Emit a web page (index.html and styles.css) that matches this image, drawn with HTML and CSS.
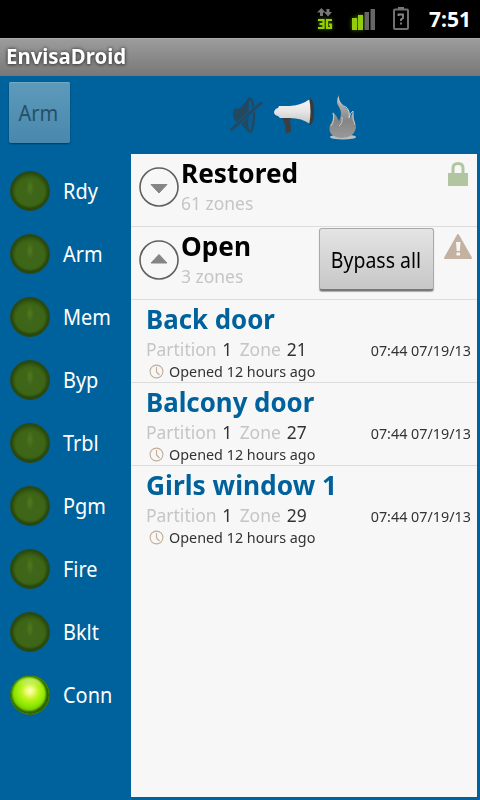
FILE: index.html
```html
<!DOCTYPE html>
<html lang="en">
<head>
<meta charset="utf-8">
<title>EnvisaDroid</title>
<link rel="stylesheet" href="styles.css">
</head>
<body>
<svg width="0" height="0" class="defs" aria-hidden="true">
  <defs>
    <linearGradient id="horn" x1="0" y1="0" x2="0" y2="1"><stop offset="0" stop-color="#f4f4f4"/><stop offset=".5" stop-color="#e6e6e6"/><stop offset="1" stop-color="#c4c4c4"/></linearGradient>
    <linearGradient id="flame" x1="0" y1="0" x2="0" y2="1"><stop offset="0" stop-color="#c4c4c4"/><stop offset=".6" stop-color="#858585"/><stop offset="1" stop-color="#999"/></linearGradient>
    <symbol id="clock" viewBox="0 0 15 15"><circle cx="7.5" cy="7.5" r="6.4" fill="none" stroke="#c3ad98" stroke-width="1.1"/><path d="M7.5 3v5l3 3" fill="none" stroke="#c3ad98" stroke-width="1.1"/></symbol>
  </defs>
</svg>
<header class="status">
  <svg class="net" width="16" height="24" viewBox="0 0 16 24">
    <path d="M4.500 0L0 4.500H3V8H6V4.500H8.500ZM9.500 1V4H7L11 8.500L15 4H12.500V1Z" fill="#777"/>
    <path class="glow" d="M1 12H6.500V20H1M2.500 16H6.500M15 12H10V20H14V16.500H12" fill="none" stroke="#99d000" stroke-width="2.200"/>
  </svg>
  <svg class="signal" width="24" height="22" viewBox="0 0 24 22">
    <path class="glow" d="M0 9H5V21H0ZM6 6H11V21H6Z" fill="#94cd0b"/>
    <path d="M12.500 3H17V21H12.500ZM18.500 0H23V21H18.500Z" fill="#666"/>
  </svg>
  <svg class="battery" width="16" height="23" viewBox="0 0 16 23">
    <path d="M5 0H11V2H5Z" fill="#777"/><rect x="1" y="2.500" width="14" height="19.500" rx="1" fill="none" stroke="#707070" stroke-width="2"/>
    <path d="M5.500 9V7.500H10V11L8 12.500V14M8 15.500V17.500" fill="none" stroke="#888" stroke-width="1.800"/>
  </svg>
  <span class="time">7:51</span>
</header>
<div class="titlebar"><span>EnvisaDroid</span></div>
<main>
  <div class="toolbar">
    <button class="arm"><span>Arm</span></button>
    <div class="tools">
      <svg width="34" height="38" viewBox="0 0 34 38"><ellipse cx="20" cy="18" rx="4" ry="16.500" fill="#075e93" stroke="#24485f" stroke-width="2.400"/><path d="M4 12L10 11L18 2Q20 17 17 34L11 27L6 25Q1 18 4 12Z" fill="#24485f"/><path d="M0 34L31 6" stroke="#075e93" stroke-width="4.500"/><path d="M1 33L32 5" stroke="#24485f" stroke-width="2.600"/></svg>
      <svg width="42" height="37" viewBox="0 0 42 37"><path d="M8 19L17 20Q15 25 17 28L17 34L12 35L11 27Z" fill="#3c3e40"/><path d="M0 14Q1 10.500 4 10L5 8H16Q28 7 36 1Q39 13 36 26Q28 20 16 20H6L4 18Q0 17 0 14Z" fill="url(#horn)"/><path d="M35 0Q40 0 40 13Q40 27 35 27Q38 14 35 0Z" fill="#383a3c"/></svg>
      <svg width="30" height="45" viewBox="0 0 30 45"><ellipse cx="15" cy="42" rx="13" ry="2.500" fill="#b8c0c5"/><path d="M11 0Q7 7 11 12Q15 18 11 26Q9 21 5 17Q6 25 2 30Q-1 42 14 43Q27 42 28 32Q26 26 25 18Q23 20 22 24Q23 16 18 13Q10 8 11 0Z" fill="url(#flame)"/><path d="M10 3Q12 10 18 12Q22 15 21 23Q22 18 25 16Q24 24 27 30M5 18Q7 26 3 31M14 22Q15 28 11 31" fill="none" stroke="#ccc" stroke-width="1"/></svg>
    </div>
  </div>
  <div class="content">
    <ul class="leds">
      <li><i></i><span>Rdy</span></li>
      <li><i></i><span>Arm</span></li>
      <li><i></i><span>Mem</span></li>
      <li><i></i><span>Byp</span></li>
      <li><i></i><span>Trbl</span></li>
      <li><i></i><span>Pgm</span></li>
      <li><i></i><span>Fire</span></li>
      <li><i></i><span>Bklt</span></li>
      <li><i class="on"></i><span>Conn</span></li>
    </ul>
    <section class="list">
      <div class="group">
        <svg class="toggle" width="40" height="40" viewBox="0 0 40 40"><circle cx="20" cy="20" r="19" fill="none" stroke="#606060" stroke-width="1.600"/><path d="M12 17.500H28L20 26Z" fill="#858585" stroke="#858585" stroke-linejoin="round"/></svg>
        <div class="label"><h2><span>Restored</span></h2><p><span>61 zones</span></p></div>
        <svg class="lock" width="20" height="24" viewBox="0 0 20 24"><path d="M5 12V6Q5 1.500 10 1.500T15 6V12" fill="none" stroke="#b2c5a1" stroke-width="3"/><path d="M0 11H20V24H0Z" fill="#b2c5a1"/></svg>
      </div>
      <div class="group">
        <svg class="toggle" width="40" height="40" viewBox="0 0 40 40"><circle cx="20" cy="20" r="19" fill="none" stroke="#606060" stroke-width="1.600"/><path d="M12 23H28L20 14.500Z" fill="#858585" stroke="#858585" stroke-linejoin="round"/></svg>
        <div class="label"><h2><span>Open</span></h2><p><span>3 zones</span></p></div>
        <button class="bypass"><span>Bypass all</span></button>
        <svg class="warn" width="28" height="25" viewBox="0 0 28 25"><path d="M14 1L27 24H1Z" fill="#c3b1a1" stroke="#c3b1a1" stroke-width="2" stroke-linejoin="round"/><path d="M12 8H16.500L15.800 17H12.700ZM12.500 18.500H16V21.500H12.500Z" fill="#f7f7f7"/></svg>
      </div>
      <article>
        <h3><span>Back door</span></h3>
        <div class="where"><div class="ids"><span class="key">Partition</span><b>1</b><span class="key">Zone</span><b>21</b></div><time>07:44 07/19/13</time></div>
        <div class="ago"><svg width="15" height="15"><use href="#clock"/></svg><span>Opened 12 hours ago</span></div>
      </article>
      <article>
        <h3><span>Balcony door</span></h3>
        <div class="where"><div class="ids"><span class="key">Partition</span><b>1</b><span class="key">Zone</span><b>27</b></div><time>07:44 07/19/13</time></div>
        <div class="ago"><svg width="15" height="15"><use href="#clock"/></svg><span>Opened 12 hours ago</span></div>
      </article>
      <article>
        <h3 class="wide"><span>Girls window 1</span></h3>
        <div class="where"><div class="ids"><span class="key">Partition</span><b>1</b><span class="key">Zone</span><b>29</b></div><time>07:44 07/19/13</time></div>
        <div class="ago"><svg width="15" height="15"><use href="#clock"/></svg><span>Opened 12 hours ago</span></div>
      </article>
    </section>
  </div>
</main>
</body>
</html>
```
FILE: styles.css
```css
* { box-sizing: border-box; margin: 0; padding: 0; }
body { width: 480px; height: 800px; overflow: hidden; background: #00629c; font-family: "Noto Sans", "Open Sans", sans-serif; display: flex; flex-direction: column; }
.defs { position: absolute; }
svg { display: block; flex: none; }
span, b, time { white-space: nowrap; display: inline-block; transform-origin: 0 50%; }
.status { height: 38px; background: #000; display: flex; align-items: flex-start; flex: none; }
.net { margin: 8px 0 0 317px; overflow: visible; }
.signal { margin: 9px 0 0 19px; overflow: visible; }
.battery { margin: 7px 0 0 17px; }
.glow { filter: drop-shadow(0 0 2px #4c7600); }
.time { color: #fff; font-size: 21px; font-weight: 700; line-height: 38px; margin-left: 20px; }
.titlebar { height: 38px; flex: none; background: linear-gradient(#9c9c9c, #777); border-top: 1px solid #aaa; padding-left: 6px; line-height: 35px; color: #fff; font-size: 21px; font-weight: 700; text-shadow: 0 0 4px #333, 0 1px 3px #555; }
.titlebar span { transform: scaleX(.97); }
main { flex: 1; display: flex; flex-direction: column; }
.toolbar { height: 78px; display: flex; }
button { border: 0; font-family: inherit; font-size: 22px; display: flex; align-items: center; justify-content: center; }
button span { transform: scaleX(.885); transform-origin: 50% 50%; margin-left: -1px; }
.arm { width: 61px; height: 61px; margin: 6px 0 0 9px; border-radius: 2px; background: linear-gradient(#5d9aba, #4988ad); color: #245067; box-shadow: 0 1px 2px #003b60, inset 0 1px #72a9c4; }
.arm span { transform: translate(-.5px, -1px) scaleX(.91); }
.tools { display: flex; gap: 11px; margin: 18px 0 0 160px; align-items: flex-start; }
.tools svg:first-child { margin-top: 3px; }
.tools svg:nth-child(2) { margin-top: 4px; margin-left: -1px; }
.tools svg:nth-child(3) { margin-top: 1px; margin-left: 1px; }
.content { flex: 1; display: flex; }
.leds { list-style: none; width: 131px; padding: 5px 0 0 10px; }
.leds li { height: 63px; display: flex; align-items: center; color: #fff; font-size: 22px; gap: 13px; }
.leds span { transform: translateY(-1.500px) scaleX(.905); }
.leds i { width: 40px; height: 40px; flex: none; border-radius: 50%; background: radial-gradient(ellipse 4px 9px at 50% 41%, rgba(83,132,32,.7), transparent), radial-gradient(circle at 50% 55%, #40651a 0, #3d6616 50%, #33510f 72%); border: 1px solid #28471e; box-shadow: inset 0 0 2px 2px #294b10, inset 0 -2px 2px #1d3b0c; }
.leds i.on { background: radial-gradient(ellipse 20px 6px at 50% 13%, rgba(196,235,134,.65), transparent), radial-gradient(circle at 50% 39%, #fcffc0 0, #eefb7c 12%, #c1f321 28%, #8de900 50%, #70be00 73%); border-color: #32730b; box-shadow: inset -1px -1px 2px 2px #2d6000; }
.list { width: 346px; height: 643px; background: #f7f7f7; color: #000; }
.group { height: 73px; display: flex; border-bottom: 1px solid #dcdcdc; }
.toggle { margin: 13px 0 0 8px; }
.label { margin-left: 2px; }
h2, h3 { font-size: 27px; line-height: 38px; font-weight: 700; height: 38px; }
h2 span { transform: scaleX(.97); }
h3 span { transform: scaleX(.957); }
h3.wide span { transform: scaleX(.975); }
.label p { font-size: 18px; line-height: 22px; color: #c5c5c5; }
.label p span { transform: scaleX(.97); }
.lock { margin: 8px 9px 0 auto; }
.bypass { width: 115px; height: 63px; margin: 1px 10px 0 auto; border-radius: 3px; background: linear-gradient(#e4e4e4, #c7c7c7); border: 1px solid #aaa; border-bottom: 2px solid #787878; color: #000; box-shadow: 0 1px 1px #aaa; }
.warn { margin: 7px 5px 0 0; }
article { height: 83px; border-bottom: 1px solid #dcdcdc; padding-left: 15px; }
article:last-child { border-bottom: 0; }
h3 { color: #00629c; }
.where { display: flex; font-size: 18px; line-height: 24px; height: 23px; }
.ids { display: flex; transform: scaleX(.97); transform-origin: 0 50%; margin-top: -1px; }
.key { color: #c5c5c5; }
.where b { font-weight: 400; color: #333; margin: 0 7.500px 0 6px; }
.where time { font-size: 15px; color: #333; margin: 0 6px 0 auto; transform: scaleX(.955); transform-origin: 100% 50%; }
.ago { display: flex; height: 20px; padding-left: 3px; gap: 5px; font-size: 15px; line-height: 20px; color: #333; align-items: center; }
.ago span { transform: scaleX(.957); }
```
